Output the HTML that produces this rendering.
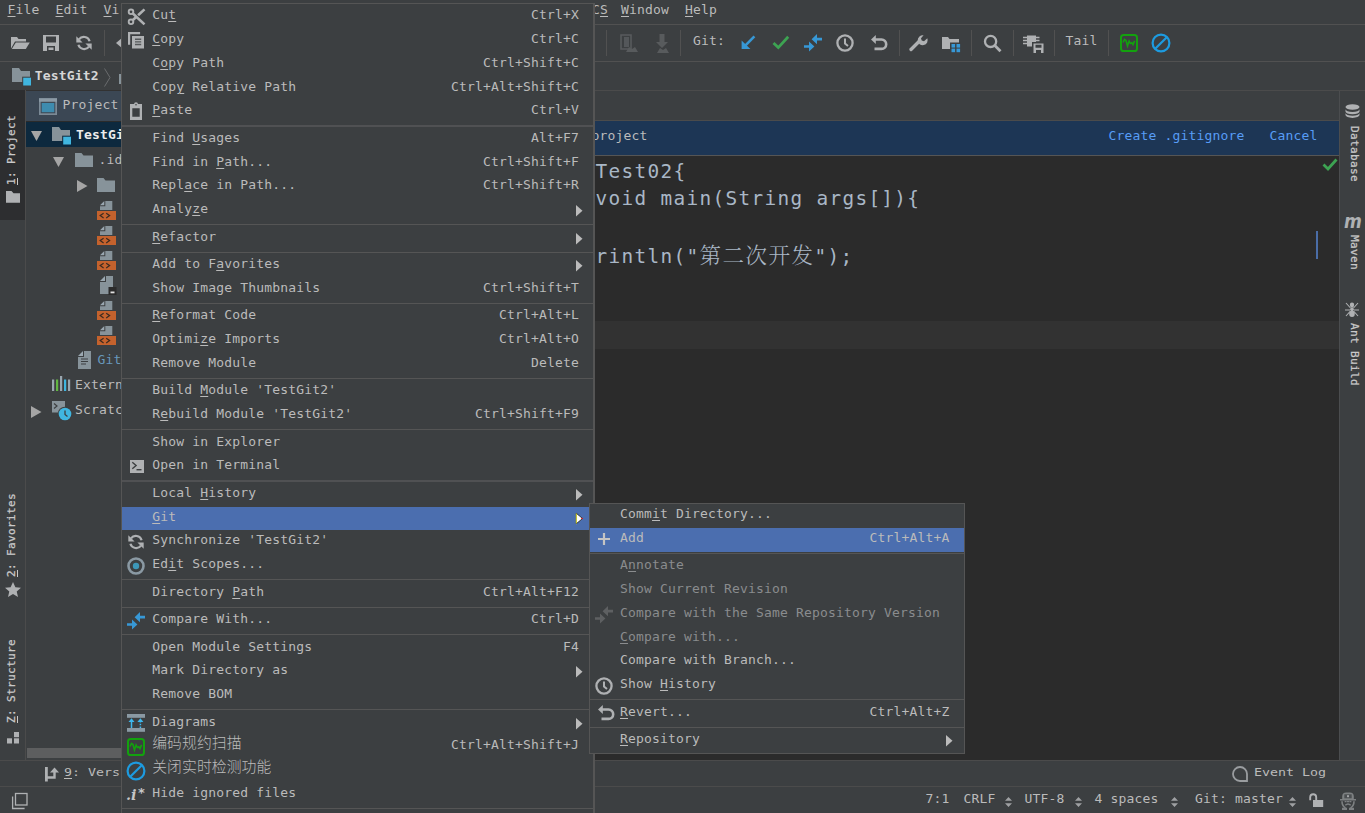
<!DOCTYPE html>
<html><head><meta charset="utf-8"><title>TestGit2</title>
<style>
*{margin:0;padding:0;box-sizing:border-box}
html,body{width:1365px;height:813px;overflow:hidden;background:#3c3f41}
body{position:relative;font-family:"DejaVu Sans Mono","Liberation Mono","Noto Sans CJK SC",monospace;font-size:13px;color:#bbbbbb;letter-spacing:0.174px;line-height:16px;white-space:pre}
.a{position:absolute}
u{text-decoration:underline;text-underline-offset:2px;text-decoration-thickness:1px}
.t{position:absolute;height:16px;line-height:16px}
.sc{position:absolute;height:16px;line-height:16px;text-align:right}
svg{position:absolute;overflow:visible}
.code{position:absolute;font-family:"DejaVu Sans Mono","Liberation Mono",monospace;font-size:19.4px;letter-spacing:1.32px;color:#a9b7c6;line-height:28px;height:28px}
.cjk{font-family:"Noto Serif CJK SC","Noto Sans CJK SC",serif;font-size:21.500px;letter-spacing:1.500px;font-weight:300}
.vt{position:absolute;transform-origin:0 0;font-size:11px;letter-spacing:0.38px;height:14px;line-height:14px;color:#c9c9c9;-webkit-text-stroke:0.25px #c9c9c9}
.mc{font-size:14.8px;letter-spacing:0.1px;font-weight:300;position:relative;top:-2px}
.sm{position:absolute;font-size:11px;letter-spacing:0;height:14px;line-height:14px;transform-origin:0 0;transform:scaleX(1.208)}
</style></head>
<body>
<div class="a" style="left:0px;top:24px;width:1365px;height:1px;background:#515151;"></div>
<div class="a" style="left:0px;top:61px;width:1365px;height:1px;background:#515151;"></div>
<div class="a" style="left:0px;top:90px;width:1365px;height:1px;background:#4b4b4b;"></div>
<div class="a" style="left:26px;top:90px;width:95px;height:1px;background:#323232;"></div>
<div class="t" style="left:7.5px;top:2px;"><u>F</u>ile</div>
<div class="t" style="left:55.5px;top:2px;"><u>E</u>dit</div>
<div class="t" style="left:103.5px;top:2px;"><u>V</u>i</div>
<div class="t" style="left:592px;top:2px;">C<u>S</u></div>
<div class="t" style="left:621px;top:2px;"><u>W</u>indow</div>
<div class="t" style="left:685px;top:2px;"><u>H</u>elp</div>
<!--toolbar-->
<div class="a" style="left:104px;top:30px;width:1px;height:26px;background:#515151;"></div>
<div class="a" style="left:606px;top:30px;width:1px;height:26px;background:#515151;"></div>
<div class="a" style="left:680px;top:30px;width:1px;height:26px;background:#515151;"></div>
<div class="a" style="left:899px;top:30px;width:1px;height:26px;background:#515151;"></div>
<div class="a" style="left:971px;top:30px;width:1px;height:26px;background:#515151;"></div>
<div class="a" style="left:1013px;top:30px;width:1px;height:26px;background:#515151;"></div>
<div class="a" style="left:1054px;top:30px;width:1px;height:26px;background:#515151;"></div>
<div class="a" style="left:1108px;top:30px;width:1px;height:26px;background:#515151;"></div>
<div class="t" style="left:693px;top:33px;">Git:</div>
<div class="t" style="left:1065.5px;top:33px;">Tail</div>
<svg style="left:11px;top:36px" width="19" height="14" viewBox="0 0 19 14"><path d="M0 1h6l1.5 2h7.5v2.5h-11l-4 7z" fill="#afb1b3"/><path d="M4.8 6.5h14l-4 6.5h-14z" fill="#afb1b3"/></svg>
<svg style="left:43px;top:35px" width="16" height="16" viewBox="0 0 16 16"><path d="M0 0h16v16h-16z M3 1.5v6h10v-6z M4 11v5h8v-5z" fill="#afb1b3" fill-rule="evenodd"/><rect x="5.5" y="12.5" width="5" height="2.5" fill="#afb1b3"/></svg>
<svg style="left:76px;top:35px" width="16" height="16" viewBox="0 0 16 16"><path d="M13.6 6.2A6 6 0 0 0 3 4.4" fill="none" stroke="#afb1b3" stroke-width="2.2"/><path d="M0.3 1.2v6.3h6.3z" fill="#afb1b3"/><path d="M2.4 9.8A6 6 0 0 0 13 11.6" fill="none" stroke="#afb1b3" stroke-width="2.2"/><path d="M15.7 14.8v-6.3h-6.3z" fill="#afb1b3"/></svg>
<svg style="left:115.8px;top:36px" width="8" height="14" viewBox="0 0 8 14"><path d="M0 7L8 0.200V13.800Z" fill="#afb1b3"/></svg>
<svg style="left:620px;top:34px" width="18" height="19" viewBox="0 0 18 19"><path d="M1 1h10v14h-10z" fill="none" stroke="#585b5d" stroke-width="1.6"/><rect x="4" y="3" width="5" height="10" fill="#54575a"/><path d="M6 18l3-5 3 2 3-2 3 5z" fill="#585b5d"/></svg>
<svg style="left:653px;top:34px" width="18" height="19" viewBox="0 0 18 19"><path d="M6.5 0h5v8h3.5l-6 6-6-6h3.5z" fill="#585b5d"/><path d="M4 19l3-5 3 2 3-2 3 5z" fill="#585b5d"/></svg>
<svg style="left:740px;top:35px" width="17" height="17" viewBox="0 0 17 17"><path d="M14.400 1.400L5 10.800" stroke="#3798d6" stroke-width="2.600" fill="none"/><path d="M1.600 14.100v-8.600l8.800 8.600z" fill="#3798d6"/></svg>
<svg style="left:771px;top:35px" width="19" height="16" viewBox="0 0 19 16"><path d="M2.500 8l4.800 4.600L17.200 1.800" fill="none" stroke="#3da352" stroke-width="2.800"/></svg>
<svg style="left:804px;top:34px" width="18" height="18" viewBox="0 0 18 18"><path d="M7.6 5.2L13 0v3.8h5v2.6h-5v3.8z" fill="#3798d6"/><path d="M10.4 12.6L5 7.4v3.8h-5v2.6h5v3.8z" fill="#3798d6"/></svg>
<svg style="left:836px;top:34px" width="18" height="18" viewBox="0 0 18 18"><circle cx="9" cy="9" r="7.6" fill="none" stroke="#afb1b3" stroke-width="2.3"/><path d="M9 4.5v5l3 2.5" fill="none" stroke="#afb1b3" stroke-width="2"/></svg>
<svg style="left:870px;top:34px" width="18" height="17" viewBox="0 0 18 17"><path d="M1 5.500L5.800 1v9z" fill="#afb1b3"/><path d="M5 5.5h6.5a4.7 4.7 0 0 1 0 9.4h-7" fill="none" stroke="#afb1b3" stroke-width="2.6"/></svg>
<svg style="left:910px;top:35px" width="18" height="17" viewBox="0 0 18 17"><path d="M1 14.5L9.5 6" stroke="#afb1b3" stroke-width="3.4" fill="none" stroke-linecap="round"/><path d="M17.3 3.2a5 5 0 1 1-3.7-2.9l-2.6 3 .7 2.3 2.3.7z" fill="#afb1b3"/></svg>
<svg style="left:942px;top:36px" width="19" height="17" viewBox="0 0 19 17"><path d="M0 1h6l1.5 2h9.5v10h-17z" fill="#afb1b3"/><rect x="8" y="6.5" width="10.5" height="10" fill="#3c3f41"/><rect x="9.5" y="8" width="3.6" height="3.6" fill="#3798d6"/><rect x="14.5" y="8" width="3.6" height="3.6" fill="#3798d6"/><rect x="9.5" y="12.6" width="3.6" height="3.6" fill="#3798d6"/><rect x="14.5" y="12.6" width="3.6" height="3.6" fill="#3798d6"/></svg>
<svg style="left:983px;top:34px" width="19" height="19" viewBox="0 0 19 19"><circle cx="7.6" cy="7.4" r="5.6" fill="none" stroke="#afb1b3" stroke-width="2.3"/><path d="M11.8 11.6l5.7 5.7" stroke="#afb1b3" stroke-width="2.8" fill="none"/></svg>
<svg style="left:1023px;top:35px" width="21" height="18" viewBox="0 0 21 18"><rect x="4" y="0.5" width="9" height="11" fill="#afb1b3"/><path d="M0 2.5h4M0 5.5h4M0 8.5h4M13 2.5h3.5M13 5.5h3.5" stroke="#afb1b3" stroke-width="1.4"/><rect x="9" y="7" width="12" height="11" fill="#3c3f41"/><path d="M10.5 8.5h10v9.5h-10z M12.5 9.8v3h6v-3z M13 15v3h5v-3z" fill="#afb1b3" fill-rule="evenodd"/></svg>
<svg style="left:1120px;top:34px" width="18" height="18" viewBox="0 0 18 18"><rect x="1" y="1" width="16" height="16" rx="2.6" fill="none" stroke="#13a10e" stroke-width="2"/><path d="M3 8.5l1.5-3 1.5 1 1.5 5.5 1.6-5 1.3 2.5 1.4-.8 1.2 1.8 1.6-3.6" fill="none" stroke="#13a10e" stroke-width="1.6"/></svg>
<svg style="left:1151px;top:33px" width="20" height="20" viewBox="0 0 20 20"><circle cx="10" cy="10" r="8.4" fill="none" stroke="#1d9be0" stroke-width="2.2"/><path d="M4.2 15.8L15.8 4.2" stroke="#1d9be0" stroke-width="2.2"/></svg>
<svg style="left:12px;top:68px" width="20" height="18" viewBox="0 0 20 18"><path d="M0 0h7l2 3h9v11h-18z" fill="#87939a"/><rect x="10.200" y="8.700" width="9.800" height="9.800" fill="#3c3f41"/><rect x="11.200" y="9.700" width="7.800" height="7.800" fill="#40b6e0"/></svg>
<div class="t" style="left:34.7px;top:68px;color:#d6d6d6"><b>TestGit2</b></div>
<svg style="left:104px;top:68px" width="7" height="19" viewBox="0 0 7 19"><path d="M0.5 0.5L6 9.5L0.5 18.5" fill="none" stroke="#6a6c6e" stroke-width="1"/></svg>
<svg style="left:119px;top:72px" width="4" height="12" viewBox="0 0 4 12"><rect x="0" y="2" width="4" height="10" fill="#87939a"/></svg>
<!--editor-->
<div class="a" style="left:595px;top:120px;width:745px;height:1px;background:#4b4b4b;"></div>
<div class="a" style="left:595px;top:121px;width:745px;height:34px;background:#1d3655;"></div>
<div class="a" style="left:595px;top:155px;width:745px;height:1px;background:#555555;"></div>
<div class="a" style="left:595px;top:156px;width:745px;height:604px;background:#2b2b2b;"></div>
<div class="a" style="left:595px;top:321px;width:745px;height:28px;background:#323232;"></div>
<div class="t" style="left:591.5px;top:128px;">project</div>
<div class="t" style="left:1108.5px;top:128px;color:#589df6">Create .gitignore</div>
<div class="t" style="left:1269.5px;top:128px;color:#589df6">Cancel</div>
<div class="code" style="left:595.5px;top:158px">Test02{</div>
<div class="code" style="left:595.5px;top:185px">void main(String args[]){</div>
<div class="code" style="left:595.5px;top:240px">rintln("<span class="cjk">第二次开发</span>");</div>
<div class="a" style="left:1316px;top:231px;width:2px;height:28px;background:#4a6da7;"></div>
<svg style="left:1322px;top:158px" width="16" height="13" viewBox="0 0 16 13"><path d="M1.5 6.5l4.5 4.5L14.5 1.5" fill="none" stroke="#3da352" stroke-width="2.8"/></svg>
<div class="a" style="left:1339px;top:91px;width:1px;height:669px;background:#4b4d4f;"></div>
<div class="a" style="left:1340px;top:91px;width:25px;height:669px;background:#3c3f41;"></div>
<div class="vt" style="left:1361px;top:125.5px;transform:rotate(90deg)">Database</div>
<div class="vt" style="left:1361px;top:235px;transform:rotate(90deg)">Maven</div>
<div class="vt" style="left:1361px;top:323px;transform:rotate(90deg)">Ant Build</div>
<svg style="left:1345px;top:104px" width="15" height="15" viewBox="0 0 15 15"><ellipse cx="7.5" cy="3" rx="7" ry="2.8" fill="#afb1b3"/><path d="M0.5 5.2a7 2.8 0 0 0 14 0v2.2a7 2.8 0 0 1-14 0z" fill="#afb1b3"/><path d="M0.5 8.9a7 2.8 0 0 0 14 0v2.2a7 2.8 0 0 1-14 0z" fill="#afb1b3"/><path d="M0.5 12.4a7 2.8 0 0 0 14 0v0.2a7 2.6 0 0 1-14 0z" fill="#afb1b3"/></svg>
<div class="a" style="left:1344px;top:210px;transform-origin:0 0;transform:scaleX(.9);font:italic bold 19px 'DejaVu Sans','Liberation Sans',sans-serif;letter-spacing:0;color:#afb1b3;line-height:22px">m</div>
<svg style="left:1345px;top:302px" width="14" height="15" viewBox="0 0 14 15"><ellipse cx="7" cy="3" rx="2.2" ry="2.4" fill="#afb1b3"/><ellipse cx="7" cy="7.2" rx="1.8" ry="2" fill="#afb1b3"/><ellipse cx="7" cy="11.8" rx="2.8" ry="3.2" fill="#afb1b3"/><path d="M1 1l4.5 5M13 1l-4.500 5M0 8h5M14 8h-5M1 14l4-4.500M13 14l-4-4.500" stroke="#afb1b3" stroke-width="1.1" fill="none"/></svg>
<div class="a" style="left:0px;top:90px;width:25px;height:130px;background:#2d2e30;"></div>
<div class="a" style="left:25px;top:91px;width:1px;height:669px;background:#4b4b4b;"></div>
<div class="vt" style="left:4.5px;top:184.5px;transform:rotate(-90deg)"><u>1</u>: Project</div>
<div class="vt" style="left:4.5px;top:576.5px;transform:rotate(-90deg)"><u>2</u>: Favorites</div>
<div class="vt" style="left:4.5px;top:722.5px;transform:rotate(-90deg)"><u>Z</u>: Structure</div>
<svg style="left:6px;top:191px" width="14" height="12" viewBox="0 0 14 12"><path d="M0 0h5.500l2 2.300h6.500v9.500h-14z" fill="#afb1b3"/></svg>
<svg style="left:5px;top:582px" width="16" height="15" viewBox="0 0 16 15"><path d="M8 0l2.4 5.300 5.600.5-4.300 3.800 1.300 5.400-5-3-5 3 1.300-5.400-4.300-3.800 5.600-.5z" fill="#afb1b3"/></svg>
<svg style="left:7px;top:731.7px" width="12" height="12" viewBox="0 0 12 12"><rect x="7" y="0" width="5" height="5.200" fill="#afb1b3"/><rect x="0" y="6.300" width="5" height="5.200" fill="#afb1b3"/><rect x="7" y="6.300" width="5" height="5.200" fill="#afb1b3"/></svg>
<!--project-->
<div class="a" style="left:26px;top:91px;width:96px;height:30px;background:#3b4754;"></div>
<div class="a" style="left:26px;top:121px;width:96px;height:1px;background:#2b2b2b;"></div>
<div class="a" style="left:26px;top:122px;width:96px;height:25px;background:#0d293e;"></div>
<svg style="left:39px;top:98px" width="18" height="17" viewBox="0 0 18 17"><rect x="0" y="0.300" width="18" height="16.700" fill="#7b8a96"/><rect x="0" y="0.300" width="18" height="3.500" fill="#8c9aa5"/><rect x="1.700" y="3.800" width="14.600" height="11.500" fill="#3f4a56"/><rect x="2.700" y="5" width="12.600" height="9.200" fill="#3e8caf"/></svg>
<div class="t" style="left:62.5px;top:97px;">Project</div>
<svg style="left:31px;top:131px" width="11" height="10" viewBox="0 0 11 10"><path d="M0 0h11l-5.500 10z" fill="#a5a5a5"/></svg>
<svg style="left:52px;top:127px" width="20" height="18" viewBox="0 0 20 18"><path d="M0 0h7l2 3h9v11h-18z" fill="#87939a"/><rect x="10.200" y="8.700" width="9.800" height="9.800" fill="#0d293e"/><rect x="11.200" y="9.700" width="7.800" height="7.800" fill="#40b6e0"/></svg>
<div class="t" style="left:76px;top:127px;color:#ececec"><b>TestGi</b></div>
<svg style="left:52.5px;top:156.5px" width="11" height="10" viewBox="0 0 11 10"><path d="M0 0h11l-5.500 10z" fill="#a5a5a5"/></svg>
<svg style="left:75px;top:152.5px" width="18" height="14" viewBox="0 0 18 14"><path d="M0 0h6.500l2 2.500h9.500v11.500h-18z" fill="#87939a"/></svg>
<div class="t" style="left:98.5px;top:151.5px;">.id</div>
<svg style="left:76.5px;top:180px" width="10.5" height="12" viewBox="0 0 10.5 12"><path d="M0 0v12l10.500-6z" fill="#a5a5a5"/></svg>
<svg style="left:97px;top:177.5px" width="18" height="14" viewBox="0 0 18 14"><path d="M0 0h6.500l2 2.500h9.500v11.500h-18z" fill="#87939a"/></svg>
<svg style="left:97px;top:201px" width="19" height="19" viewBox="0 0 19 19"><path d="M8.300 0H15.300V9H3V5.300H8.300z" fill="#87939a"/><path d="M3 4.300L7.300 0V4.300z" fill="#9aa7b0"/><rect x="0" y="10" width="19" height="9" fill="#c4622d"/><path d="M6.600 12.300L3.200 14.600l3.400 2.300M9.200 12.300l3.400 2.300-3.400 2.300" fill="none" stroke="#3a2a20" stroke-width="1.200"/></svg>
<svg style="left:97px;top:226px" width="19" height="19" viewBox="0 0 19 19"><path d="M8.300 0H15.300V9H3V5.300H8.300z" fill="#87939a"/><path d="M3 4.300L7.300 0V4.300z" fill="#9aa7b0"/><rect x="0" y="10" width="19" height="9" fill="#c4622d"/><path d="M6.600 12.300L3.200 14.600l3.400 2.300M9.200 12.300l3.400 2.300-3.400 2.300" fill="none" stroke="#3a2a20" stroke-width="1.200"/></svg>
<svg style="left:97px;top:251px" width="19" height="19" viewBox="0 0 19 19"><path d="M8.300 0H15.300V9H3V5.300H8.300z" fill="#87939a"/><path d="M3 4.300L7.300 0V4.300z" fill="#9aa7b0"/><rect x="0" y="10" width="19" height="9" fill="#c4622d"/><path d="M6.600 12.300L3.200 14.600l3.400 2.300M9.200 12.300l3.400 2.300-3.400 2.300" fill="none" stroke="#3a2a20" stroke-width="1.200"/></svg>
<svg style="left:97px;top:301px" width="19" height="19" viewBox="0 0 19 19"><path d="M8.300 0H15.300V9H3V5.300H8.300z" fill="#87939a"/><path d="M3 4.300L7.300 0V4.300z" fill="#9aa7b0"/><rect x="0" y="10" width="19" height="9" fill="#c4622d"/><path d="M6.600 12.300L3.200 14.600l3.400 2.300M9.200 12.300l3.400 2.300-3.400 2.300" fill="none" stroke="#3a2a20" stroke-width="1.200"/></svg>
<svg style="left:97px;top:326px" width="19" height="19" viewBox="0 0 19 19"><path d="M8.300 0H15.300V9H3V5.300H8.300z" fill="#87939a"/><path d="M3 4.300L7.300 0V4.300z" fill="#9aa7b0"/><rect x="0" y="10" width="19" height="9" fill="#c4622d"/><path d="M6.600 12.300L3.200 14.600l3.400 2.300M9.200 12.300l3.400 2.300-3.400 2.300" fill="none" stroke="#3a2a20" stroke-width="1.200"/></svg>
<svg style="left:99.5px;top:276px" width="17" height="19" viewBox="0 0 17 19"><path d="M6 0H13V18H0V6H6z" fill="#87939a"/><path d="M0 5L5 0V5z" fill="#9aa7b0"/><rect x="8.500" y="11" width="8" height="8" fill="#2b2b2b"/><rect x="10.500" y="15.500" width="4" height="1.800" fill="#e0e0e0"/></svg>
<svg style="left:77.5px;top:351px" width="13" height="18" viewBox="0 0 13 18"><path d="M6 0H13V18H0V6H6z" fill="#87939a"/><path d="M0 5L5 0V5z" fill="#9aa7b0"/><path d="M3 8h7M3 10.500h7M3 13h5" stroke="#3c3f41" stroke-width="1.200"/></svg>
<div class="t" style="left:97.5px;top:352px;color:#6897bb">Git</div>
<svg style="left:52px;top:376px" width="18" height="15" viewBox="0 0 18 15"><rect x="0" y="3.500" width="2.200" height="11.500" fill="#9aa7b0"/><rect x="4" y="3.500" width="2.200" height="11.500" fill="#62b543"/><rect x="8" y="0" width="2.200" height="15" fill="#9aa7b0"/><rect x="12" y="3.500" width="2.200" height="11.500" fill="#40b6e0"/><rect x="16" y="3.500" width="2.200" height="11.500" fill="#9aa7b0"/></svg>
<div class="t" style="left:75px;top:377px;">Extern</div>
<svg style="left:31px;top:405.5px" width="10.5" height="12" viewBox="0 0 10.5 12"><path d="M0 0v12l10.500-6z" fill="#a5a5a5"/></svg>
<div class="t" style="left:75px;top:402px;">Scratc</div>
<svg style="left:52px;top:401px" width="20" height="20" viewBox="0 0 20 20"><rect x="0" y="0" width="13" height="11.500" fill="#87939a"/><path d="M2 2.500l3 2.500-3 2.500" fill="none" stroke="#3c3f41" stroke-width="1.200"/><circle cx="13" cy="13" r="7.300" fill="#3c3f41"/><circle cx="13" cy="13" r="6.300" fill="#40b6e0"/><path d="M13 9.500v4l2.500 2" fill="none" stroke="#3c3f41" stroke-width="1.300"/></svg>
<div class="a" style="left:27px;top:748px;width:95px;height:10px;background:#5d5e5f;"></div>
<div class="a" style="left:0px;top:760px;width:1365px;height:1px;background:#4b4b4b;"></div>
<div class="a" style="left:0px;top:786px;width:1365px;height:1px;background:#4b4b4b;"></div>
<div class="sm" style="left:63.5px;top:766px"><u>9</u>: Vers</div>
<div class="sm" style="left:1253.5px;top:766px">Event Log</div>
<svg style="left:44.5px;top:767px" width="14" height="15" viewBox="0 0 14 15"><rect x="0" y="0" width="2.800" height="14.500" fill="#afb1b3"/><path d="M2 10.500h7.500V5" fill="none" stroke="#afb1b3" stroke-width="2.400"/><path d="M5 5.500L9.500 0.500L14 5.500z" fill="#afb1b3"/></svg>
<svg style="left:1232px;top:766px" width="16" height="16" viewBox="0 0 16 16"><path d="M8 1a7 7 0 1 0 0 14h7v-7a7 7 0 0 0-7-7z" fill="none" stroke="#9a9da0" stroke-width="1.800"/></svg>
<div class="t" style="left:925.5px;top:791px;">7:1</div>
<div class="t" style="left:963.5px;top:791px;">CRLF</div>
<div class="t" style="left:1024.5px;top:791px;">UTF-8</div>
<div class="t" style="left:1094.5px;top:791px;">4 spaces</div>
<div class="t" style="left:1195px;top:791px;">Git: master</div>
<svg style="left:1005.0px;top:797px" width="7" height="10" viewBox="0 0 7 10"><path d="M3.500 0L7 3.700H0z M3.500 10L7 6.300H0z" fill="#9fa1a3"/></svg>
<svg style="left:1075.0px;top:797px" width="7" height="10" viewBox="0 0 7 10"><path d="M3.500 0L7 3.700H0z M3.500 10L7 6.300H0z" fill="#9fa1a3"/></svg>
<svg style="left:1171.0px;top:797px" width="7" height="10" viewBox="0 0 7 10"><path d="M3.500 0L7 3.700H0z M3.500 10L7 6.300H0z" fill="#9fa1a3"/></svg>
<svg style="left:1289.0px;top:797px" width="7" height="10" viewBox="0 0 7 10"><path d="M3.500 0L7 3.700H0z M3.500 10L7 6.300H0z" fill="#9fa1a3"/></svg>
<svg style="left:12px;top:793px" width="16" height="16" viewBox="0 0 16 16"><rect x="3.500" y="0.500" width="11.500" height="11.500" fill="none" stroke="#afb1b3" stroke-width="1.300"/><path d="M0.600 3.500v12h12" fill="none" stroke="#afb1b3" stroke-width="1.300"/></svg>
<svg style="left:1309px;top:793px" width="15" height="15" viewBox="0 0 15 15"><rect x="4" y="7" width="10.200" height="7" fill="#afb1b3"/><path d="M1.200 7.200V4.300a3 3 0 0 1 6 0V7" fill="none" stroke="#afb1b3" stroke-width="1.900"/></svg>
<svg style="left:1340px;top:792px" width="16" height="18" viewBox="0 0 16 18"><path d="M2.200 7.500V4.500a4 4 0 0 1 4-4h3.600a4 4 0 0 1 4 4V7.500z" fill="#7d8082"/><rect x="4.300" y="2.300" width="7.400" height="4" fill="#3c3f41" fill-opacity=".75"/><rect x="7" y="3.200" width="2" height="2" fill="#a4a6a8"/><rect x="0" y="7" width="16" height="1.500" fill="#7d8082"/><path d="M2 9.300q0 4.500 3.500 6.700M14 9.300q0 4.500-3.500 6.700" fill="none" stroke="#7d8082" stroke-width="1.600"/><path d="M4.600 9.600h2M7 9.600h2M9.400 9.600h2" stroke="#7d8082" stroke-width="1.200"/><path d="M5.300 13.300q2.700-2.800 5.400 0" fill="none" stroke="#7d8082" stroke-width="1.500"/><path d="M2 15.800h5v2.200h-5zM9 15.800h5v2.200h-5z" fill="#7d8082"/></svg>
<!--context menu-->
<div class="a" style="left:121px;top:3px;width:474px;height:812px;background:#3c3f41;border-left:1px solid #555555;border-top:1px solid #555555;border-right:2px solid #555555"></div>
<div class="a" style="left:122px;top:125px;width:471px;height:2px;background:#505153;"></div>
<div class="a" style="left:122px;top:224px;width:471px;height:1px;background:#555555;"></div>
<div class="a" style="left:122px;top:252px;width:471px;height:1px;background:#555555;"></div>
<div class="a" style="left:122px;top:303px;width:471px;height:1px;background:#555555;"></div>
<div class="a" style="left:122px;top:378px;width:471px;height:1px;background:#555555;"></div>
<div class="a" style="left:122px;top:429px;width:471px;height:1px;background:#555555;"></div>
<div class="a" style="left:122px;top:480px;width:471px;height:2px;background:#505153;"></div>
<div class="a" style="left:122px;top:579px;width:471px;height:1px;background:#555555;"></div>
<div class="a" style="left:122px;top:607px;width:471px;height:1px;background:#555555;"></div>
<div class="a" style="left:122px;top:634px;width:471px;height:1px;background:#555555;"></div>
<div class="a" style="left:122px;top:709px;width:471px;height:1px;background:#555555;"></div>
<div class="a" style="left:122px;top:808px;width:471px;height:1px;background:#555555;"></div>
<div class="a" style="left:122px;top:507px;width:471px;height:23px;background:#4b6eaf;"></div>
<div class="t" style="left:152.2px;top:7px;">Cu<u>t</u></div>
<div class="sc" style="left:380px;width:198.900px;top:7px">Ctrl+X</div>
<div class="t" style="left:152.2px;top:31px;"><u>C</u>opy</div>
<div class="sc" style="left:380px;width:198.900px;top:31px">Ctrl+C</div>
<div class="t" style="left:152.2px;top:55px;">C<u>o</u>py Path</div>
<div class="sc" style="left:380px;width:198.900px;top:55px">Ctrl+Shift+C</div>
<div class="t" style="left:152.2px;top:79px;">Cop<u>y</u> Relative Path</div>
<div class="sc" style="left:380px;width:198.900px;top:79px">Ctrl+Alt+Shift+C</div>
<div class="t" style="left:152.2px;top:102px;"><u>P</u>aste</div>
<div class="sc" style="left:380px;width:198.900px;top:102px">Ctrl+V</div>
<div class="t" style="left:152.2px;top:130px;">Find <u>U</u>sages</div>
<div class="sc" style="left:380px;width:198.900px;top:130px">Alt+F7</div>
<div class="t" style="left:152.2px;top:154px;">Find in <u>P</u>ath...</div>
<div class="sc" style="left:380px;width:198.900px;top:154px">Ctrl+Shift+F</div>
<div class="t" style="left:152.2px;top:177px;">Repl<u>a</u>ce in Path...</div>
<div class="sc" style="left:380px;width:198.900px;top:177px">Ctrl+Shift+R</div>
<div class="t" style="left:152.2px;top:201px;">Analy<u>z</u>e</div>
<svg style="left:576px;top:204.8px" width="6.5" height="11.4" viewBox="0 0 6.5 11.4"><path d="M0 0L6.500 5.700L0 11.400Z" fill="#bbbbbb"/></svg>
<div class="t" style="left:152.2px;top:229px;"><u>R</u>efactor</div>
<svg style="left:576px;top:232.8px" width="6.5" height="11.4" viewBox="0 0 6.5 11.4"><path d="M0 0L6.500 5.700L0 11.400Z" fill="#bbbbbb"/></svg>
<div class="t" style="left:152.2px;top:256px;">Add to F<u>a</u>vorites</div>
<svg style="left:576px;top:259.8px" width="6.5" height="11.4" viewBox="0 0 6.5 11.4"><path d="M0 0L6.500 5.700L0 11.400Z" fill="#bbbbbb"/></svg>
<div class="t" style="left:152.2px;top:280px;">Show Image Thumbnails</div>
<div class="sc" style="left:380px;width:198.900px;top:280px">Ctrl+Shift+T</div>
<div class="t" style="left:152.2px;top:307px;"><u>R</u>eformat Code</div>
<div class="sc" style="left:380px;width:198.900px;top:307px">Ctrl+Alt+L</div>
<div class="t" style="left:152.2px;top:331px;">Optimi<u>z</u>e Imports</div>
<div class="sc" style="left:380px;width:198.900px;top:331px">Ctrl+Alt+O</div>
<div class="t" style="left:152.2px;top:355px;">Remove Module</div>
<div class="sc" style="left:380px;width:198.900px;top:355px">Delete</div>
<div class="t" style="left:152.2px;top:382px;">Build <u>M</u>odule 'TestGit2'</div>
<div class="t" style="left:152.2px;top:406px;">R<u>e</u>build Module 'TestGit2'</div>
<div class="sc" style="left:380px;width:198.900px;top:406px">Ctrl+Shift+F9</div>
<div class="t" style="left:152.2px;top:434px;">Show in Explorer</div>
<div class="t" style="left:152.2px;top:457px;">Open in Terminal</div>
<div class="t" style="left:152.2px;top:485px;">Local <u>H</u>istory</div>
<svg style="left:576px;top:488.8px" width="6.5" height="11.4" viewBox="0 0 6.5 11.4"><path d="M0 0L6.500 5.700L0 11.400Z" fill="#bbbbbb"/></svg>
<div class="t" style="left:152.2px;top:509px;"><u>G</u>it</div>
<svg style="left:576px;top:512.8px" width="6.5" height="11.4" viewBox="0 0 6.5 11.4"><path d="M0 0L6.500 5.700L0 11.400Z" fill="#bbbbbb"/></svg>
<div class="t" style="left:152.2px;top:532px;">Synchronize 'TestGit2'</div>
<div class="t" style="left:152.2px;top:556px;">Ed<u>i</u>t Scopes...</div>
<div class="t" style="left:152.2px;top:584px;">Directory <u>P</u>ath</div>
<div class="sc" style="left:380px;width:198.900px;top:584px">Ctrl+Alt+F12</div>
<div class="t" style="left:152.2px;top:611px;">Compare With...</div>
<div class="sc" style="left:380px;width:198.900px;top:611px">Ctrl+D</div>
<div class="t" style="left:152.2px;top:639px;">Open Module Settings</div>
<div class="sc" style="left:380px;width:198.900px;top:639px">F4</div>
<div class="t" style="left:152.2px;top:662px;">Mark Directory as</div>
<svg style="left:576px;top:665.8px" width="6.5" height="11.4" viewBox="0 0 6.5 11.4"><path d="M0 0L6.500 5.700L0 11.400Z" fill="#bbbbbb"/></svg>
<div class="t" style="left:152.2px;top:686px;">Remove BOM</div>
<div class="t" style="left:152.2px;top:714px;">Diagrams</div>
<svg style="left:576px;top:717.8px" width="6.5" height="11.4" viewBox="0 0 6.5 11.4"><path d="M0 0L6.500 5.700L0 11.400Z" fill="#bbbbbb"/></svg>
<div class="t" style="left:152.2px;top:737px;"><span class="mc">编码规约扫描</span></div>
<div class="sc" style="left:380px;width:198.900px;top:737px">Ctrl+Alt+Shift+J</div>
<div class="t" style="left:152.2px;top:761px;"><span class="mc">关闭实时检测功能</span></div>
<div class="t" style="left:152.2px;top:785px;">Hide ignored files</div>
<div class="a" style="left:575px;top:508px;width:9px;height:16px;background:#4b6eaf;"></div>
<svg style="left:576px;top:512.5px" width="7" height="11" viewBox="0 0 7 11"><path d="M0.300 0.300L6.600 5.500L0.300 10.700Z" fill="#ffffff" stroke="#1a1a1a" stroke-width="0.800"/><path d="M0.300 0.500V10.500" stroke="#f2ee20" stroke-width="0.900"/><circle cx="6" cy="5.500" r="0.800" fill="#f01818"/></svg>
<svg style="left:128px;top:8px" width="18" height="18" viewBox="0 0 18 18"><circle cx="3" cy="3.800" r="2.300" fill="none" stroke="#afb1b3" stroke-width="1.900"/><circle cx="3" cy="13.800" r="2.300" fill="none" stroke="#afb1b3" stroke-width="1.900"/><path d="M4.600 5.300L16.500 16.400" stroke="#afb1b3" stroke-width="2.600" fill="none"/><path d="M4.600 12.300L8.500 8.800M10.100 7.300L16.500 1.400" stroke="#afb1b3" stroke-width="2.600" fill="none"/></svg>
<svg style="left:128px;top:32px" width="16" height="17" viewBox="0 0 16 17"><path d="M1.100 12.700V1.100h11" fill="none" stroke="#afb1b3" stroke-width="2.200"/><rect x="4" y="4" width="12" height="12.500" fill="#afb1b3"/><path d="M7 7.300h6.200M7 9.900h6.200M7 12.500h6.200" stroke="#55585a" stroke-width="1.400"/></svg>
<svg style="left:130px;top:103px" width="12" height="17" viewBox="0 0 12 17"><path d="M0 1h12v16h-12z M2.300 5.200v8.600h7.400v-8.600z" fill="#afb1b3" fill-rule="evenodd"/><path d="M4 1.200a2 2 0 0 1 4 0z" fill="#afb1b3"/><circle cx="6" cy="1.800" r=".8" fill="#3c3f41"/></svg>
<svg style="left:130px;top:460px" width="14" height="13" viewBox="0 0 14 13"><rect width="14" height="13" fill="#afb1b3"/><path d="M2.300 2.300l3.800 3.200-3.800 3.200" fill="none" stroke="#3c3f41" stroke-width="1.400"/><path d="M6.500 9.700h5" stroke="#3c3f41" stroke-width="1.400"/></svg>
<svg style="left:128px;top:534px" width="16" height="16" viewBox="0 0 16 16"><path d="M13.6 6.2A6 6 0 0 0 3 4.4" fill="none" stroke="#afb1b3" stroke-width="2.2"/><path d="M0.3 1.2v6.3h6.3z" fill="#afb1b3"/><path d="M2.4 9.8A6 6 0 0 0 13 11.6" fill="none" stroke="#afb1b3" stroke-width="2.2"/><path d="M15.7 14.8v-6.3h-6.3z" fill="#afb1b3"/></svg>
<svg style="left:127px;top:557px" width="18" height="18" viewBox="0 0 18 18"><circle cx="9" cy="9" r="7.500" fill="none" stroke="#8a99a3" stroke-width="2.600"/><circle cx="9" cy="9" r="3.200" fill="#3d97b8"/></svg>
<svg style="left:127px;top:612px" width="18" height="18" viewBox="0 0 18 18"><path d="M7.6 5.2L13 0v3.8h5v2.6h-5v3.8z" fill="#3798d6"/><path d="M10.4 12.6L5 7.4v3.8h-5v2.6h5v3.8z" fill="#3798d6"/></svg>
<svg style="left:127px;top:714px" width="18" height="18" viewBox="0 0 18 18"><rect x="0" y="0" width="18" height="3.800" fill="#8a99a3"/><rect x="0" y="14" width="18" height="3.800" fill="#8a99a3"/><path d="M4.500 14V6" stroke="#3db8ee" stroke-width="1.500"/><path d="M1.500 8L4.500 4.300L7.500 8z" fill="#3db8ee"/><path d="M13.400 14V6" stroke="#3db8ee" stroke-width="1.500" stroke-dasharray="1.500 1.300"/><path d="M10.400 8L13.400 4.300L16.400 8z" fill="#3db8ee"/></svg>
<svg style="left:127px;top:738px" width="18" height="18" viewBox="0 0 18 18"><rect x="1" y="1" width="16" height="16" rx="2.6" fill="none" stroke="#13a10e" stroke-width="2"/><path d="M3 8.5l1.5-3 1.5 1 1.5 5.5 1.6-5 1.3 2.5 1.4-.8 1.2 1.8 1.6-3.6" fill="none" stroke="#13a10e" stroke-width="1.6"/></svg>
<svg style="left:126px;top:761px" width="20" height="20" viewBox="0 0 20 20"><circle cx="10" cy="10" r="8.4" fill="none" stroke="#1d9be0" stroke-width="2.2"/><path d="M4.2 15.8L15.8 4.2" stroke="#1d9be0" stroke-width="2.2"/></svg>
<div class="a" style="left:126px;top:786px;font:italic bold 14.500px 'DejaVu Serif','Liberation Serif',serif;letter-spacing:0;color:#c6c6c6;line-height:18px">.i<span style="font:bold 13px 'DejaVu Sans Mono',monospace;position:relative;top:-3px;left:1px">*</span></div>
<!--submenu-->
<div class="a" style="left:589px;top:503px;width:376px;height:251px;background:#3c3f41;border:1px solid #555555"></div>
<div class="a" style="left:590px;top:528px;width:374px;height:24px;background:#4b6eaf;"></div>
<div class="a" style="left:590px;top:553px;width:374px;height:1px;background:#555555;"></div>
<div class="a" style="left:590px;top:699px;width:374px;height:1px;background:#555555;"></div>
<div class="a" style="left:590px;top:727px;width:374px;height:1px;background:#555555;"></div>
<div class="t" style="left:620px;top:506px;">Comm<u>i</u>t Directory...</div>
<div class="t" style="left:620px;top:530px;">Add</div>
<div class="sc" style="left:750px;width:199.600px;top:530px">Ctrl+Alt+A</div>
<div class="t" style="left:620px;top:557px;color:#8a8c8e">A<u>n</u>notate</div>
<div class="t" style="left:620px;top:581px;color:#8a8c8e">Show Current Revision</div>
<div class="t" style="left:620px;top:605px;color:#8a8c8e">Compare with the Same Repository Version</div>
<div class="t" style="left:620px;top:629px;color:#8a8c8e"><u>C</u>ompare with...</div>
<div class="t" style="left:620px;top:652px;">Compare with Branch...</div>
<div class="t" style="left:620px;top:676px;">Show <u>H</u>istory</div>
<div class="t" style="left:620px;top:704px;"><u>R</u>evert...</div>
<div class="sc" style="left:750px;width:199.600px;top:704px">Ctrl+Alt+Z</div>
<div class="t" style="left:620px;top:731px;"><u>R</u>epository</div>
<svg style="left:946px;top:734.8px" width="6.5" height="11.4" viewBox="0 0 6.5 11.4"><path d="M0 0L6.500 5.700L0 11.400Z" fill="#bbbbbb"/></svg>
<svg style="left:598px;top:533px" width="12" height="12" viewBox="0 0 12 12"><path d="M6 0v12M0 6h12" stroke="#c4c4c4" stroke-width="2.200"/></svg>
<svg style="left:595px;top:605.5px" width="18" height="18" viewBox="0 0 18 18"><path d="M7.600 5.200L13 0v3.800h5v2.600h-5v3.800z" fill="#5e6062"/><path d="M10.400 12.600L5 7.400v3.800h-5v2.600h5v3.800z" fill="#5e6062"/></svg>
<svg style="left:595px;top:677px" width="18" height="18" viewBox="0 0 18 18"><circle cx="9" cy="9" r="7.6" fill="none" stroke="#afb1b3" stroke-width="2.3"/><path d="M9 4.5v5l3 2.5" fill="none" stroke="#afb1b3" stroke-width="2"/></svg>
<svg style="left:597px;top:704px" width="18" height="17" viewBox="0 0 18 17"><path d="M1 5.500L5.800 1v9z" fill="#afb1b3"/><path d="M5 5.5h6.5a4.7 4.7 0 0 1 0 9.4h-7" fill="none" stroke="#afb1b3" stroke-width="2.6"/></svg>
</body></html>
